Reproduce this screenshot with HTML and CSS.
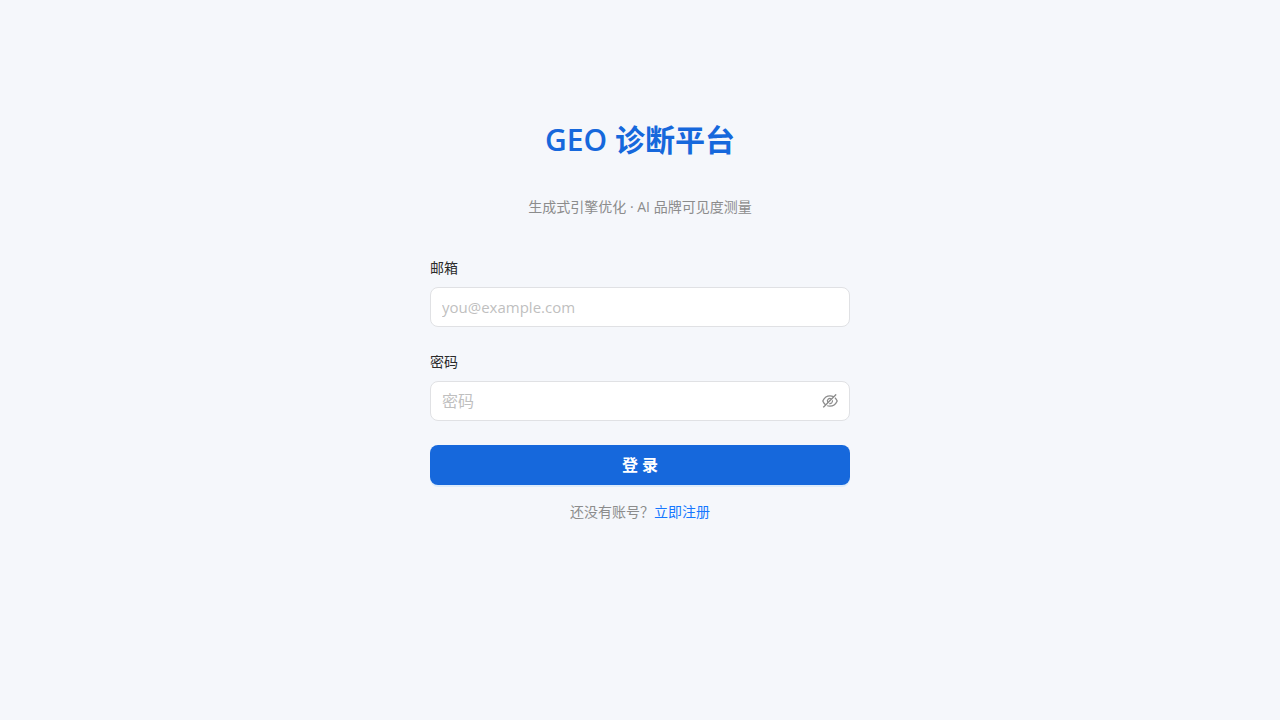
FILE: index.html
```html
<!DOCTYPE html>
<html lang="zh-CN">
<head>
<meta charset="utf-8">
<meta name="viewport" content="width=device-width, initial-scale=1">
<title>GEO 诊断平台</title>
<link rel="stylesheet" href="styles.css">
</head>
<body>
<main class="login">
  <h1 class="title">GEO 诊断平台</h1>
  <p class="subtitle">生成式引擎优化 · AI 品牌可见度测量</p>
  <form class="form">
    <div class="field">
      <label class="label" for="email">邮箱</label>
      <div class="control"><input class="input input-email" id="email" type="email" placeholder="you@example.com"></div>
    </div>
    <div class="field">
      <label class="label" for="password">密码</label>
      <div class="control">
        <input class="input" id="password" type="password" placeholder="密码">
        <button class="toggle" type="button" aria-label="显示密码">
          <svg viewBox="64 64 896 896" width="16" height="16" fill="currentColor" aria-hidden="true"><path d="M942.2 486.2Q889.47 375.11 816.7 305l-50.88 50.88C807.31 395.53 843.45 447.4 874.7 512 791.5 684.2 673.4 766 512 766q-72.67 0-133.87-22.38L323 798.75Q408 838 512 838q288.3 0 430.2-300.3a60.29 60.29 0 000-51.5zm-63.57-320.64L836 122.88a8 8 0 00-11.32 0L715.31 232.2Q624.86 186 512 186q-288.3 0-430.2 300.3a60.3 60.3 0 000 51.5q56.69 119.4 136.5 191.41L112.48 835a8 8 0 000 11.31L155.17 889a8 8 0 0011.31 0l712.15-712.12a8 8 0 000-11.32zM149.3 512C232.6 339.8 350.7 258 512 258c54.54 0 104.13 9.36 149.12 28.39l-70.3 70.3a176 176 0 00-238.13 238.13l-83.42 83.42C223.1 637.49 183.3 582.28 149.3 512zm246.7 0a112.11 112.11 0 01146.2-106.69L401.31 546.2A112 112 0 01396 512z"/><path d="M508 624c-3.46 0-6.87-.16-10.25-.47l-52.82 52.82a176.09 176.09 0 00227.42-227.42l-52.82 52.82c.31 3.38.47 6.79.47 10.25a111.94 111.94 0 01-112 112z"/></svg>
        </button>
      </div>
    </div>
    <button class="submit" type="submit">登 录</button>
  </form>
  <p class="footer">还没有账号？<a class="link" href="#register">立即注册</a></p>
</main>
</body>
</html>
```

FILE: styles.css
```css
* {
  box-sizing: border-box;
}

body {
  margin: 0;
  min-height: 100vh;
  display: flex;
  justify-content: center;
  background: #f5f7fb;
  color: #2b2b2b;
  font: 14px/22px "Open Sans", "Noto Sans CJK SC", sans-serif;
}

.login {
  width: 100%;
  max-width: 420px;
  padding-top: 120px;
}

.title {
  margin: 0 0 36px;
  font-size: 30px;
  line-height: 40px;
  font-weight: 600;
  text-align: center;
  color: #1668dc;
}

.subtitle {
  margin: 0 0 39px;
  text-align: center;
  color: #8c8c8c;
}

.field {
  margin-bottom: 24px;
}

.label {
  display: block;
  margin-bottom: 8px;
}

.control {
  display: flex;
  align-items: center;
  height: 40px;
  padding: 0 11px;
  background: #fff;
  border: 1px solid #e0e1e4;
  border-radius: 8px;
}

.input {
  flex: 1;
  min-width: 0;
  padding: 0;
  border: 0;
  outline: 0;
  background: transparent;
  font: inherit;
  font-size: 16px;
  line-height: 24px;
}

.input-email {
  font-size: 15px;
}

.input::placeholder {
  color: #bfbfbf;
  opacity: 1;
}

.toggle {
  display: flex;
  padding: 0;
  border: 0;
  background: none;
  color: #8c8c8c;
}

.submit {
  display: block;
  width: 100%;
  height: 40px;
  padding: 0;
  border: 0;
  border-radius: 8px;
  background: #1668dc;
  box-shadow: 0 2px 0 rgba(5, 145, 255, 0.1);
  color: #fff;
  font: inherit;
  font-size: 16px;
  font-weight: 600;
}

.footer {
  margin: 16px 0 0;
  text-align: center;
  color: #8c8c8c;
}

.link {
  color: #1677ff;
  text-decoration: none;
}
```
